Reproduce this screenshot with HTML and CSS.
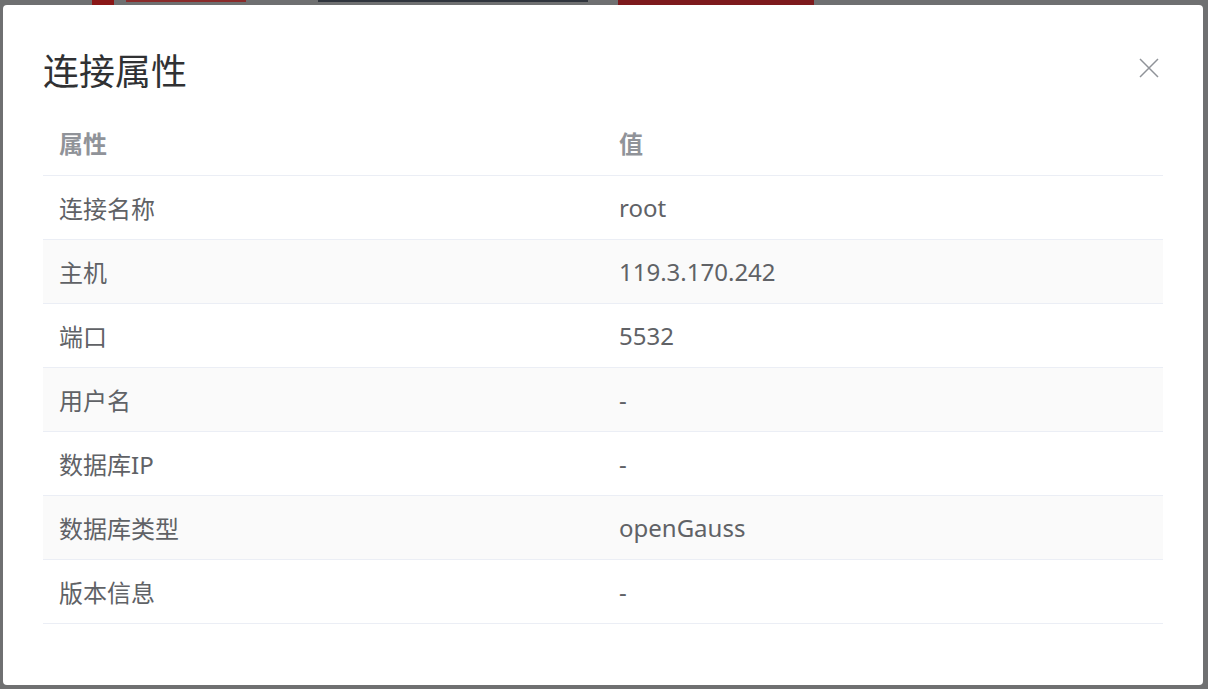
FILE: index.html
```html
<!DOCTYPE html>
<html lang="zh-CN">
<head>
<meta charset="utf-8">
<title>连接属性</title>
<link rel="stylesheet" href="styles.css">
</head>
<body>
<div class="backdrop">
  <div class="peek peek-red-a"></div>
  <div class="peek peek-red-line"></div>
  <div class="peek peek-dark-line"></div>
  <div class="peek peek-red-b"></div>
  <div class="dialog">
    <div class="dialog-header">
      <h1 class="dialog-title">连接属性</h1>
      <button class="close-btn" aria-label="关闭">
        <svg width="20" height="20" viewBox="0 0 20 20"><path d="M1 1 L19 19 M19 1 L1 19" stroke="#909399" stroke-width="1.5" fill="none"/></svg>
      </button>
    </div>
    <table class="props">
      <thead>
        <tr><th>属性</th><th>值</th></tr>
      </thead>
      <tbody>
        <tr><td>连接名称</td><td>root</td></tr>
        <tr><td>主机</td><td>119.3.170.242</td></tr>
        <tr><td>端口</td><td>5532</td></tr>
        <tr><td>用户名</td><td>-</td></tr>
        <tr><td>数据库IP</td><td>-</td></tr>
        <tr><td>数据库类型</td><td>openGauss</td></tr>
        <tr><td>版本信息</td><td>-</td></tr>
      </tbody>
    </table>
  </div>
</div>
</body>
</html>
```

FILE: styles.css
```css
html, body {
  margin: 0;
  padding: 0;
  height: 100%;
  overflow: hidden;
}
body {
  font-family: "Noto Sans", "Noto Sans CJK SC", sans-serif;
  background: #6f7071;
}
.backdrop {
  position: relative;
  width: 1208px;
  height: 689px;
  box-sizing: border-box;
  padding: 5px 5px 4px 3px;
  background: #6f7071;
}
.peek {
  position: absolute;
  top: 0;
  height: 5px;
}
.peek-red-a {
  left: 92px;
  width: 22px;
  background: #8a1717;
}
.peek-red-line {
  left: 126px;
  width: 120px;
  height: 2px;
  background: #8a2b2b;
}
.peek-dark-line {
  left: 318px;
  width: 270px;
  height: 2px;
  background: #30353d;
}
.peek-red-b {
  left: 618px;
  width: 196px;
  background: #7d1a1d;
}
.dialog {
  position: relative;
  width: 1200px;
  height: 680px;
  box-sizing: border-box;
  background: #ffffff;
  border-radius: 4px;
  padding: 40px 40px 0 40px;
}
.dialog-header {
  display: flex;
  align-items: flex-start;
  justify-content: space-between;
  height: 54px;
}
.dialog-title {
  margin: 0;
  font-size: 36px;
  font-weight: 400;
  line-height: 54px;
  color: #303133;
}
.close-btn {
  border: 0;
  background: transparent;
  padding: 0;
  margin-top: 13px;
  margin-right: 4px;
  width: 20px;
  height: 20px;
  display: flex;
}
.props {
  width: 1120px;
  margin-top: 12px;
  border-collapse: collapse;
  table-layout: fixed;
}
.props th,
.props td {
  height: 64px;
  padding: 0 16px;
  text-align: left;
  font-size: 24px;
  border-bottom: 1px solid #ebeef5;
  box-sizing: border-box;
}
.props th {
  color: #909399;
  font-weight: 700;
}
.props td {
  color: #606266;
}
.props tbody tr:nth-child(even) td {
  background: #fafafa;
}
```
